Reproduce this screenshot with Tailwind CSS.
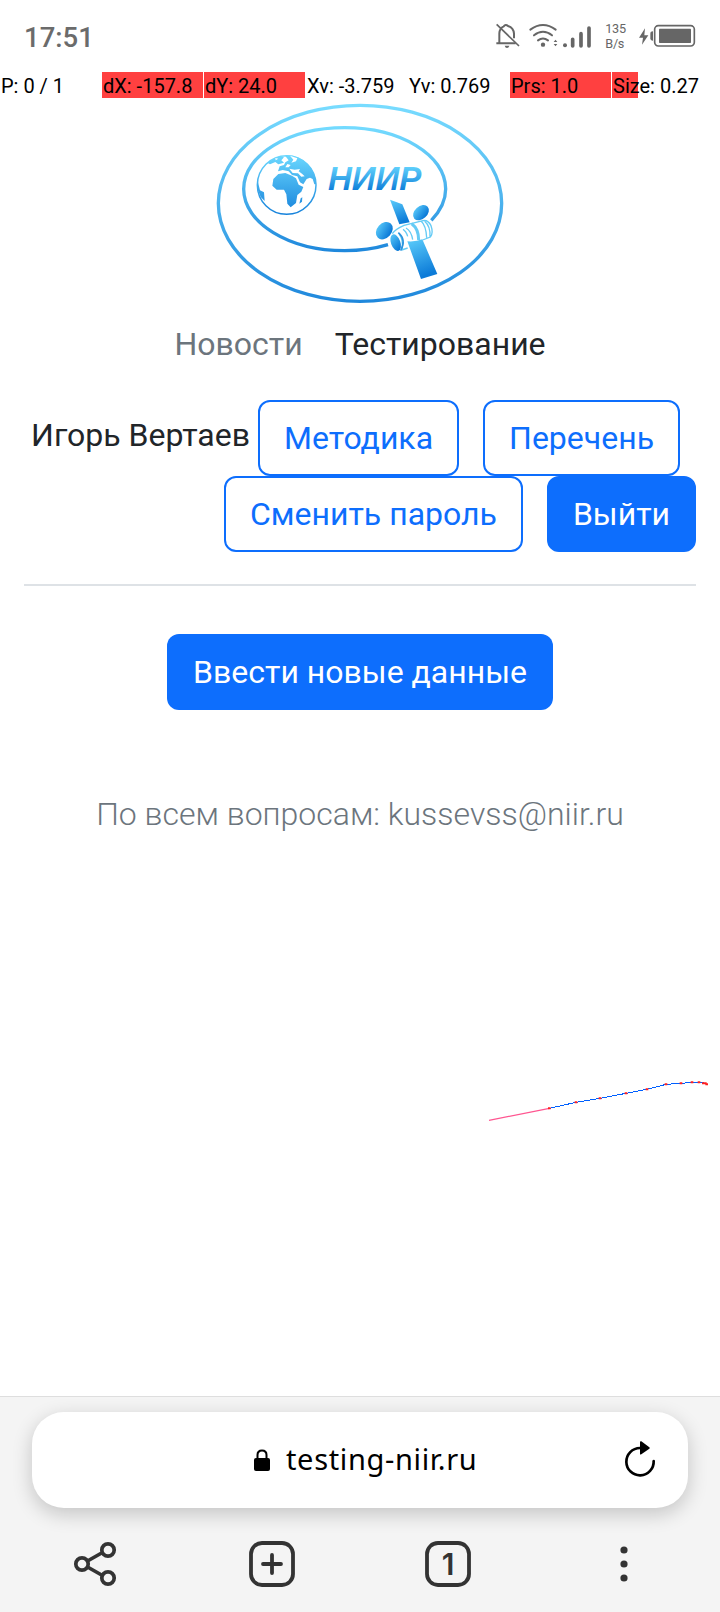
<!DOCTYPE html>
<html lang="ru">
<head>
<meta charset="utf-8">
<title>Тестирование</title>
<script src="https://cdn.jsdelivr.net/npm/@tailwindcss/browser@4"></script>
</head>
<body class="relative flex h-[1612px] w-[720px] flex-col overflow-hidden bg-white font-['Roboto',sans-serif] text-[32px] leading-[48px] text-[#212529]">

  <!-- Status bar -->
  <div class="flex h-[72px] shrink-0 justify-between text-[#6b6b6b]">
    <div class="pt-[18px] pl-6 text-[27.5px] leading-[40px] font-medium">17:51</div>
    <svg class="h-[72px] w-[250px]" viewBox="0 0 750 216" fill="none" stroke="#666">
      <path d="M88 130V100Q89 84 101 79Q107 71 114 78Q131 84 132 101V115M79 130H137" stroke-width="6"/>
      <path d="M80 73L147 138" stroke-width="5"/>
      <path d="M104 137H118Q116 144 111 144Q106 144 104 137Z" fill="#666" stroke="none"/>
      <g stroke-width="6" stroke-linecap="round">
        <path d="M181 89Q219 61 257 89M192 106Q219 85 246 106M204 121Q219 110 234 121"/>
      </g>
      <circle cx="219" cy="134" r="6.500" fill="#666" stroke="none"/>
      <path d="M251 126L256.500 119L262 126ZM251 132L256.500 139L262 132Z" fill="#666" stroke="none"/>
      <circle cx="285" cy="136" r="6" fill="#666" stroke="none"/>
      <path d="M308 118V138M333 101V138M357 84V138" stroke-width="11" stroke-linecap="round"/>
      <g fill="#666" stroke="none" font-family="Roboto" font-size="38">
        <text x="406" y="99" textLength="62">135</text>
        <text x="406" y="144" textLength="57">B/s</text>
      </g>
      <path d="M525 85L507 113H519L516 134L535 106H523Z" fill="#666" stroke="none"/>
      <path d="M549 94Q541 94 541 101V115Q541 122 549 122Z" fill="#666" stroke="none"/>
      <rect x="554" y="77" width="119" height="61" rx="11" stroke-width="5"/>
      <rect x="567" y="86" width="96" height="43" rx="2" fill="#666" stroke="none"/>
    </svg>
  </div>

  <!-- Pointer location read-out -->
  <div class="flex h-[26px] shrink-0 gap-px text-[20px] leading-[28px] whitespace-nowrap text-black">
    <div class="w-[101px] pl-px">P: 0 / 1</div>
    <div class="w-[101px] bg-[#ff4040] pl-px">dX: -157.8</div>
    <div class="w-[101px] bg-[#ff4040] pl-px">dY: 24.0</div>
    <div class="w-[101px] pl-px">Xv: -3.759</div>
    <div class="w-[101px] pl-px">Yv: 0.769</div>
    <div class="w-[101px] bg-[#ff4040] pl-px">Prs: 1.0</div>
    <div class="w-[26px] bg-[#ff4040] pl-px">Size: 0.27</div>
  </div>

  <!-- Logo -->
  <svg class="mx-auto h-[212px] w-[300px] shrink-0" viewBox="0 9 900 636" fill="none">
    <defs>
      <linearGradient id="go" x1="0" y1="30" x2="0" y2="620" gradientUnits="userSpaceOnUse"><stop stop-color="#78dcff"/><stop offset="1" stop-color="#1f88dc"/></linearGradient>
      <linearGradient id="gi" x1="0" y1="95" x2="0" y2="470" gradientUnits="userSpaceOnUse"><stop stop-color="#74dbff"/><stop offset="1" stop-color="#1f88dc"/></linearGradient>
      <linearGradient id="gg" x1="0" y1="178" x2="0" y2="362" gradientUnits="userSpaceOnUse"><stop stop-color="#6cd9ff"/><stop offset="1" stop-color="#1480da"/></linearGradient>
      <linearGradient id="gt" x1="0" y1="216" x2="0" y2="288" gradientUnits="userSpaceOnUse"><stop stop-color="#60d0fc"/><stop offset="1" stop-color="#0c7bd8"/></linearGradient>
      <linearGradient id="gs" x1="0" y1="0" x2="0.300" y2="1"><stop stop-color="#5ccdfb"/><stop offset="1" stop-color="#0c7bd8"/></linearGradient>
      <clipPath id="globe"><circle cx="230" cy="270" r="89"/></clipPath>
    </defs>
    <ellipse cx="450" cy="325" rx="425" ry="294" stroke="url(#go)" stroke-width="10"/>
    <path d="M664 376C692 347 707 315 707 282C707 180 571 98 404 98S101 180 101 282S237 467 404 467C450 467 494 461 534 449" stroke="url(#gi)" stroke-width="10"/>
    <circle cx="230" cy="270" r="88" stroke="url(#gg)" stroke-width="4.500"/>
    <g clip-path="url(#globe)" fill="url(#gg)">
      <path d="M190 192L206 184L222 187L214 196L222 203L205 208L196 201L180 208L172 203ZM224 181L262 178L296 200L315 228L320 266L313 268L308 252L300 248L290 252L280 268L270 262L262 244L246 240L236 229L218 225L204 229L209 214L222 210L226 202L236 196ZM143 258L150 286L162 292L164 318L152 306L140 276Z"/>
      <path d="M205 237L226 234L246 242L258 250L266 269L280 276L274 290L262 300L258 324L242 337L232 326L229 298L222 284L200 284L187 272L190 252ZM272 310L277 307L276 320L268 326Z"/>
      <path d="M240 182L250 194L244 203L258 199L262 190ZM232 207L242 210L236 217L226 217ZM238 221L254 224L270 222L266 229L276 236L284 244L274 245L264 235L248 234ZM196 189L205 191L197 196Z" fill="#fff"/>
    </g>
    <text x="354" y="286" font-family="Liberation Sans" font-size="97" font-weight="700" font-style="italic" textLength="280" lengthAdjust="spacingAndGlyphs" fill="url(#gt)">НИИР</text>
    <g fill="url(#gs)">
      <path d="M540 314L577 328L599 382L568 388Z"/>
      <ellipse cx="523" cy="407" rx="29" ry="22" transform="rotate(-48 523 407)"/>
      <ellipse cx="633" cy="353" rx="27" ry="19" transform="rotate(-42 633 353)"/>
      <path d="M592 439Q618 441 637 433L682 537L633 552Z"/>
      <ellipse cx="557" cy="443" rx="14" ry="26" transform="rotate(-20 557 443)"/>
    </g>
    <g stroke="#65cbf5" stroke-width="4">
      <path d="M547 416Q555 403 582 391L639 377Q654 374 663 392Q671 414 661 426L638 435M568 417Q581 436 576 463M579 403Q588 408 593 424M588 399Q604 408 608 434M575 465L593 459M633 378Q648 391 650 428M644 379Q662 394 660 426"/>
      <path d="M605 386Q626 401 626 435" stroke-width="9"/>
      <path d="M565 413Q590 434 572 467" stroke="#2b95df" stroke-width="5"/>
    </g>
  </svg>

  <nav class="mt-[10px] flex shrink-0 justify-center gap-8">
    <a class="text-[#6c757d]">Новости</a>
    <a>Тестирование</a>
  </nav>

  <!-- User actions -->
  <div class="mx-6 mt-8 flex shrink-0 flex-col items-end border-b-2 border-[#dee2e6] pb-8 whitespace-nowrap">
    <div class="mr-4 flex h-[76px]">
      <span class="mt-[11px] mr-2">Игорь Вертаев</span>
      <button class="mr-6 rounded-xl border-2 border-[#0d6efd] px-6 text-[#0d6efd]">Методика</button>
      <button class="rounded-xl border-2 border-[#0d6efd] px-6 text-[#0d6efd]">Перечень</button>
    </div>
    <div class="flex h-[76px] gap-6">
      <button class="rounded-xl border-2 border-[#0d6efd] px-6 text-[#0d6efd]">Сменить пароль</button>
      <button class="rounded-xl border-2 border-[#0d6efd] bg-[#0d6efd] px-6 text-white">Выйти</button>
    </div>
  </div>

  <button class="mx-auto mt-12 h-[76px] shrink-0 rounded-xl bg-[#0d6efd] px-[26px] text-white">Ввести новые данные</button>
  <p class="mt-20 text-center font-light text-[#6c757d]">По всем вопросам: kussevss@niir.ru</p>

  <!-- Pointer trail drawn over the page -->
  <svg class="pointer-events-none absolute top-[1060px] left-[470px] h-[80px] w-[250px]" viewBox="0 0 750 240" fill="none">
    <path d="M57 181L238 145" stroke="#ff5590" stroke-width="3.500"/>
    <path d="M238 145L318 127L390 115L468 100L531 88L588 73L633 70L666 67L687 67L702 69L711 73" stroke="#0060ff" stroke-width="3" shape-rendering="crispEdges"/>
    <path d="M234 145h8M314 127h8M386 115h8M464 100h8M527 88h8M584 73h8M629 70h8M662 67h8M683 67h8M696 70h14M706 73h8" stroke="#ff2020" stroke-width="6"/>
  </svg>

  <!-- Browser toolbar -->
  <footer class="mt-auto flex h-[216px] shrink-0 flex-col border-t border-[#dedede] bg-[#f4f4f4]">
    <div class="mx-8 mt-[15px] flex h-24 items-center rounded-[32px] bg-white shadow-[0_6px_20px_rgba(0,0,0,0.2)]">
      <svg class="ml-[222px] h-[22px] w-4" viewBox="0 0 16 22"><path d="M3.500 10V6Q3.500 1.500 8 1.500T12.500 6V10" fill="none" stroke="#000" stroke-width="2"/><rect y="9" width="16" height="13" rx="2"/></svg>
      <span class="ml-4 w-[196px] pb-[3px] font-['Noto_Sans',sans-serif] text-[29px] leading-[40px] tracking-[0.65px] whitespace-nowrap text-black">testing-niir.ru</span>
      <svg class="mr-[30px] ml-auto h-[40px] w-[36px]" viewBox="0 0 108 120" fill="none"><path d="M95 63A41 41 0 1 1 54 24" stroke="#000" stroke-width="8" stroke-linecap="round"/><path d="M54 6Q54 3 58 4L82 22Q85 24 82 26L58 43Q54 45 54 41Z" fill="#000"/></svg>
    </div>
    <div class="mx-2 mt-8 grid h-12 grid-cols-4 items-center justify-items-center">
      <svg class="h-12 w-12" viewBox="0 0 48 48" fill="none" stroke="#333" stroke-width="3.700"><circle cx="10" cy="24" r="6.200"/><circle cx="36" cy="10" r="6.200"/><circle cx="36" cy="38" r="6.200"/><path d="M15.500 21L30.500 12.500M15.500 27L30.500 35.500"/></svg>
      <svg class="h-12 w-12" viewBox="0 0 48 48" fill="none" stroke="#333" stroke-width="3.800"><rect x="3" y="3" width="42" height="42" rx="11"/><path d="M24 15V33M15 24H33" stroke-linecap="round"/></svg>
      <svg class="h-12 w-12" viewBox="0 0 48 48" fill="none"><rect x="3" y="3" width="42" height="42" rx="11" stroke="#333" stroke-width="3.800"/><text x="24" y="35" text-anchor="middle" font-family="Inter" font-size="30" font-weight="600" fill="#333">1</text></svg>
      <svg class="h-12 w-12" viewBox="0 0 48 48" fill="#333"><circle cx="24" cy="10" r="3.600"/><circle cx="24" cy="24" r="3.600"/><circle cx="24" cy="38" r="3.600"/></svg>
    </div>
  </footer>
</body>
</html>
